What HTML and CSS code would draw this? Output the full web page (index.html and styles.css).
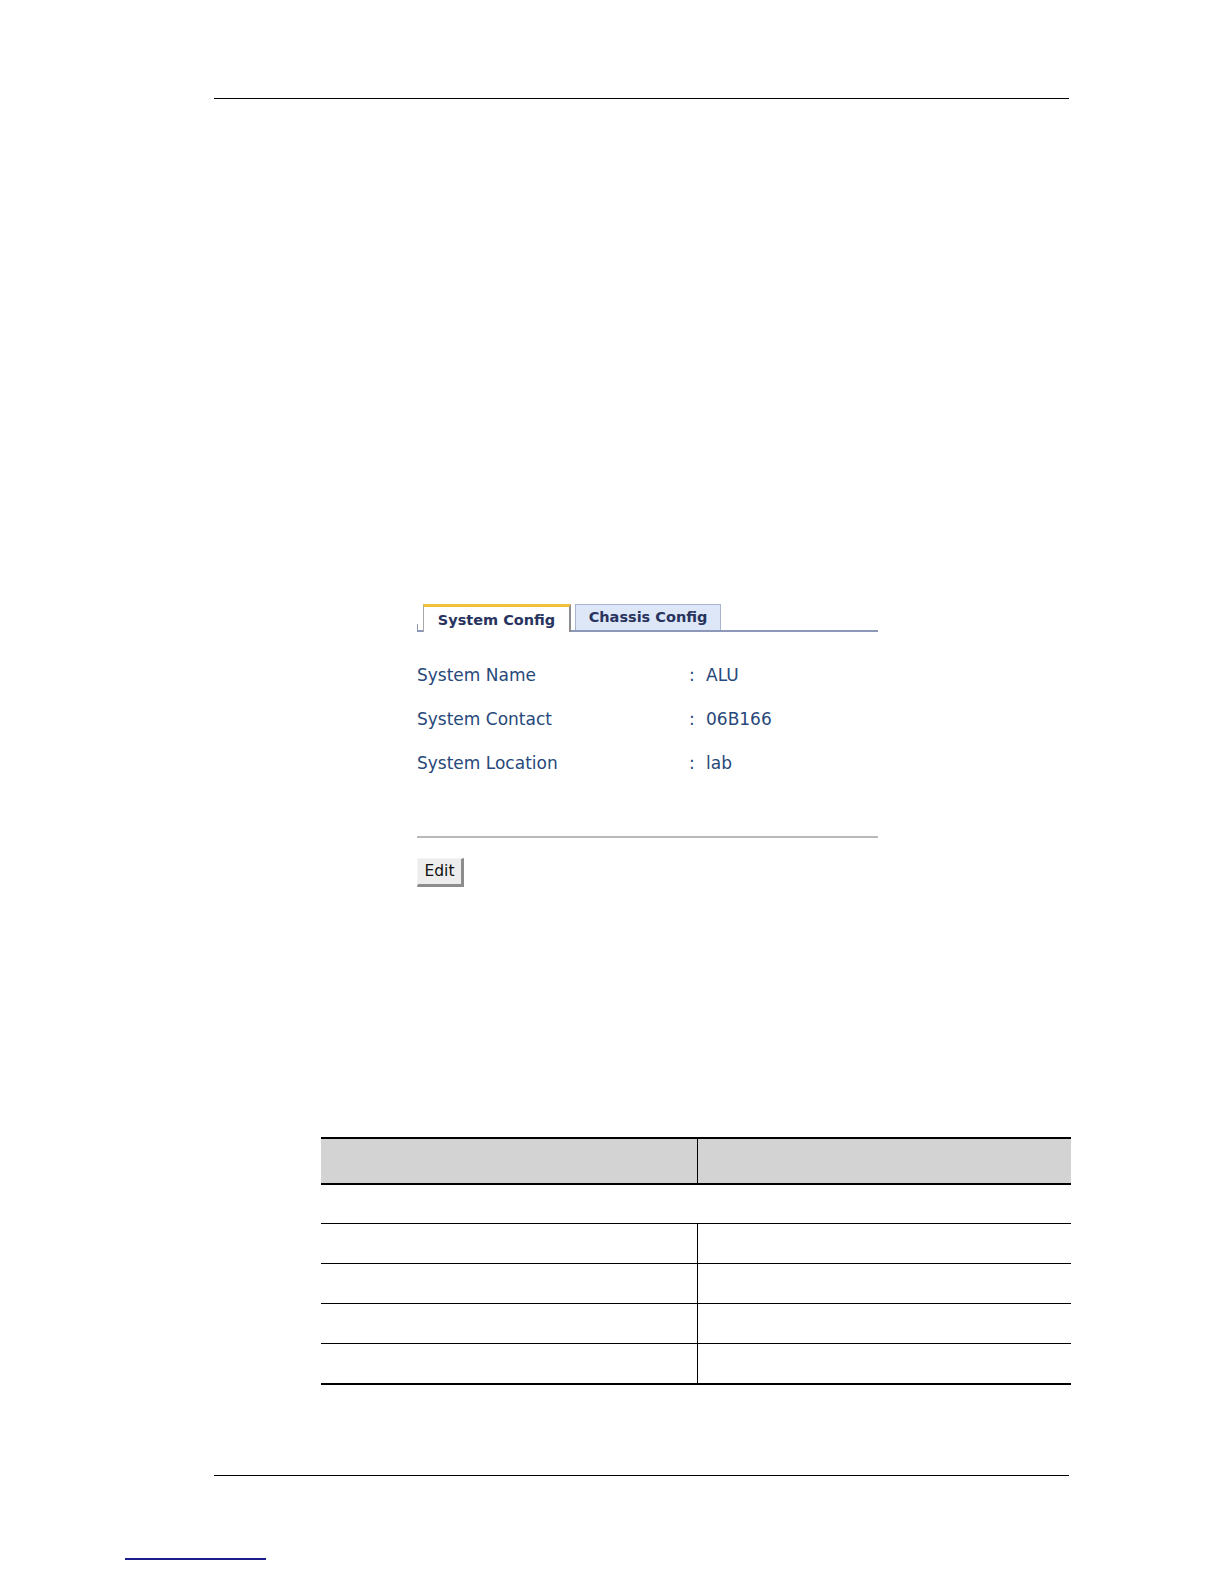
FILE: index.html
```html
<!DOCTYPE html>
<html lang="en">
<head>
<meta charset="utf-8">
<title>System Config</title>
<link rel="stylesheet" href="styles.css">
</head>
<body>
<div class="page">
  <div class="rule rule-top"></div>

  <section class="shot">
    <div class="tabbar">
      <span class="tab tab-active">System Config</span>
      <span class="tab tab-idle">Chassis Config</span>
    </div>
    <div class="fields">
      <div class="field"><span class="label">System Name</span><span class="colon">:</span><span class="value">ALU</span></div>
      <div class="field"><span class="label">System Contact</span><span class="colon">:</span><span class="value">06B166</span></div>
      <div class="field"><span class="label">System Location</span><span class="colon">:</span><span class="value">lab</span></div>
    </div>
    <div class="sep"></div>
    <button class="btn" type="button">Edit</button>
  </section>

  <table class="spec">
    <thead>
      <tr><th class="c1"></th><th class="c2"></th></tr>
    </thead>
    <tbody>
      <tr class="section"><td colspan="2"></td></tr>
      <tr class="row"><td class="c1"></td><td class="c2"></td></tr>
      <tr class="row"><td class="c1"></td><td class="c2"></td></tr>
      <tr class="row"><td class="c1"></td><td class="c2"></td></tr>
      <tr class="row last"><td class="c1"></td><td class="c2"></td></tr>
    </tbody>
  </table>

  <div class="rule rule-bottom"></div>
  <a class="footlink" href="#"></a>
</div>
</body>
</html>
```

FILE: styles.css
```css
html {
  overflow: hidden;
}

html, body {
  margin: 0;
  padding: 0;
  background: #ffffff;
}

.page {
  padding-top: 98px;
  padding-bottom: 10px;
  font-family: "DejaVu Sans", Verdana, sans-serif;
}

.rule {
  height: 0;
  border-top: 1px solid #000;
  margin-left: 214px;
  width: 855px;
}

/* screenshot panel */
.shot {
  margin-left: 417px;
  width: 461px;
  margin-top: 505px;
}

.tabbar {
  display: flex;
  align-items: flex-end;
  height: 26px;
  border-bottom: 2px solid #8d98b8;
}

.tabbar::before {
  content: "";
  width: 0;
  height: 8px;
  border-left: 1px solid #8d98b8;
  margin-right: 5px;
  margin-bottom: -2px;
}

.tab {
  box-sizing: border-box;
  display: flex;
  align-items: center;
  justify-content: center;
  font-weight: bold;
  font-size: 14.5px;
  color: #28345e;
  white-space: nowrap;
}

.tab-active {
  width: 148px;
  height: 28px;
  margin-bottom: -2px;
  background: #ffffff;
  border-top: 3px solid #f1c03a;
  border-left: 1px solid #a8a8a8;
  border-right: 2px solid #8e8e8e;
  padding-top: 1px;
}

.tab-idle {
  width: 146px;
  height: 26px;
  margin-left: 4px;
  background: #dde7f7;
  border: 1px solid #a9b5cd;
  border-bottom: none;
  padding-bottom: 1px;
}

.fields {
  padding-top: 21px;
}

.field {
  display: flex;
  height: 44px;
  align-items: center;
  font-size: 17px;
  color: #27487a;
}

.label {
  width: 272px;
}

.colon {
  width: 17px;
}

.sep {
  margin-top: 51px;
  border-top: 2px solid #b9b9b9;
}

.btn {
  display: block;
  margin-top: 20px;
  box-sizing: border-box;
  width: 47px;
  height: 29px;
  padding: 0 0 1px 0;
  background: #ededed;
  border-top: 1px solid #f4f4f4;
  border-left: 1px solid #f4f4f4;
  border-right: 3px solid #8c8c8c;
  border-bottom: 3px solid #8c8c8c;
  font-family: "DejaVu Sans", Verdana, sans-serif;
  font-size: 15.5px;
  color: #111;
  text-align: center;
}

/* specification table */
.spec {
  margin-left: 321px;
  margin-top: 250px;
  width: 750px;
  border-collapse: separate;
  border-spacing: 0;
  table-layout: fixed;
}

.spec th,
.spec td {
  padding: 0;
}

.spec .c1 {
  width: 376px;
  border-right: 1px solid #000;
}

.spec th {
  height: 44px;
  background: #d3d3d3;
  border-top: 2px solid #000;
  border-bottom: 2px solid #000;
}

.spec .section td {
  height: 38px;
}

.spec .row td {
  height: 39px;
  border-top: 1px solid #000;
}

.spec .row.last td {
  border-bottom: 2px solid #000;
}

.rule-bottom {
  margin-top: 90px;
}

.footlink {
  display: block;
  margin-left: 125px;
  margin-top: 82px;
  width: 141px;
  height: 0;
  border-bottom: 2px solid #1d1d8c;
}
```
